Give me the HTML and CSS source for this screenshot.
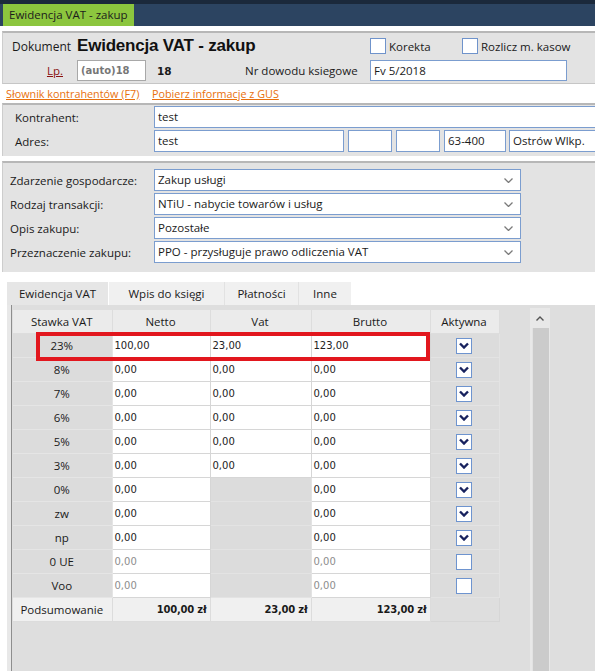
FILE: index.html
```html
<!DOCTYPE html>
<html lang="pl">
<head>
    <meta charset="UTF-8">
    <title>Ewidencja VAT - zakup</title>
    <link rel="stylesheet" href="styles.css">
</head>
<body>

<div class="topbar">
    <div class="doc-tab">Ewidencja VAT - zakup</div>
</div>

<!-- Document header -->
<section class="panel doc-head">
    <div class="row r1">
        <span class="lbl-doc">Dokument</span>
        <h1 class="doc-title">Ewidencja VAT - zakup</h1>
        <label class="chk chk-korekta"><span class="box"></span>Korekta</label>
        <label class="chk"><span class="box"></span>Rozlicz m. kasow</label>
    </div>
    <div class="row r2">
        <span class="lp"><a href="#">Lp.</a></span>
        <div class="field field-auto">(auto)18</div>
        <b class="num">18</b>
        <span class="lbl-nr">Nr dowodu ksiegowe</span>
        <div class="field field-nr">Fv 5/2018</div>
    </div>
</section>

<div class="links">
    <a href="#" class="link-first">Słownik kontrahentów (F7)</a>
    <a href="#">Pobierz informacje z GUS</a>
</div>

<!-- Kontrahent -->
<section class="panel contr">
    <div class="row">
        <span class="lbl">Kontrahent:</span>
        <div class="field w-full">test</div>
    </div>
    <div class="row">
        <span class="lbl">Adres:</span>
        <div class="field w-street">test</div>
        <div class="field w-nr"></div>
        <div class="field w-nr"></div>
        <div class="field w-zip">63-400</div>
        <div class="field w-city">Ostrów Wlkp.</div>
    </div>
</section>

<!-- Classification -->
<section class="panel events">
    <div class="row">
        <span class="lbl">Zdarzenie gospodarcze:</span>
        <div class="field select">Zakup usługi<svg class="chev" width="9" height="5"><polyline points="0.5,0.5 4.5,4.5 8.5,0.5"/></svg></div>
    </div>
    <div class="row">
        <span class="lbl">Rodzaj transakcji:</span>
        <div class="field select">NTiU - nabycie towarów i usług<svg class="chev" width="9" height="5"><polyline points="0.5,0.5 4.5,4.5 8.5,0.5"/></svg></div>
    </div>
    <div class="row">
        <span class="lbl">Opis zakupu:</span>
        <div class="field select">Pozostałe<svg class="chev" width="9" height="5"><polyline points="0.5,0.5 4.5,4.5 8.5,0.5"/></svg></div>
    </div>
    <div class="row">
        <span class="lbl">Przeznaczenie zakupu:</span>
        <div class="field select">PPO - przysługuje prawo odliczenia VAT<svg class="chev" width="9" height="5"><polyline points="0.5,0.5 4.5,4.5 8.5,0.5"/></svg></div>
    </div>
</section>

<div class="tabs">
    <div class="tab active">Ewidencja VAT</div>
    <div class="tab t-wpis">Wpis do księgi</div>
    <div class="tab t-plat">Płatności</div>
    <div class="tab t-inne">Inne</div>
</div>

<div class="grid-outer">
    <div class="grid-inner">
        <div class="table-wrap">
            <table class="vat">
                <colgroup>
                    <col class="c-rate">
                    <col class="c-net">
                    <col class="c-vat">
                    <col class="c-gross">
                    <col class="c-act">
                </colgroup>
                <thead>
                    <tr>
                        <th>Stawka VAT</th>
                        <th>Netto</th>
                        <th>Vat</th>
                        <th>Brutto</th>
                        <th>Aktywna</th>
                    </tr>
                </thead>
                <tbody id="rows"></tbody>
                <tfoot>
                    <tr>
                        <td class="rate">Podsumowanie</td>
                        <td class="sum">100,00 zł</td>
                        <td class="sum">23,00 zł</td>
                        <td class="sum">123,00 zł</td>
                        <td class="act"></td>
                    </tr>
                </tfoot>
            </table>
            <div class="highlight"></div>
        </div>
        <div class="scrollbar">
            <div class="sb-up"><svg width="8" height="5"><polyline points="0.5,4.5 4,1 7.5,4.5"/></svg></div>
            <div class="sb-thumb"></div>
        </div>
    </div>
</div>

<script>
    // rate, netto, vat (null = disabled), brutto, active, dimmed values
    const rows = [
        ["23%", "100,00", "23,00", "123,00", true, false],
        ["8%", "0,00", "0,00", "0,00", true, false],
        ["7%", "0,00", "0,00", "0,00", true, false],
        ["6%", "0,00", "0,00", "0,00", true, false],
        ["5%", "0,00", "0,00", "0,00", true, false],
        ["3%", "0,00", "0,00", "0,00", true, false],
        ["0%", "0,00", null, "0,00", true, false],
        ["zw", "0,00", null, "0,00", true, false],
        ["np", "0,00", null, "0,00", true, false],
        ["0 UE", "0,00", null, "0,00", false, true],
        ["Voo", "0,00", null, "0,00", false, true]
    ];

    const tick = '<svg width="10" height="7"><polyline points="1,1.5 5,5.5 9,1.5"/></svg>';
    let html = "";
    rows.forEach(r => {
        let dim = r[5] ? " dim" : "";
        html += `<tr>
            <td class="rate">${r[0]}</td>
            <td class="val${dim}">${r[1]}</td>
            ${r[2] === null ? '<td class="off"></td>' : `<td class="val${dim}">${r[2]}</td>`}
            <td class="val${dim}">${r[3]}</td>
            <td class="act"><span class="cb">${r[4] ? tick : ""}</span></td>
        </tr>`;
    });
    document.getElementById("rows").innerHTML = html;
</script>

</body>
</html>
```

FILE: styles.css
```css
/* General */
body {
    margin: 0;
    width: 595px;
    height: 672px;
    overflow: hidden;
    background: #fff;
    color: #1a1a1a;
    font-family: 'Open Sans', sans-serif;
    font-size: 11px;
}

a {
    color: inherit;
}

/* Top window bar */
.topbar {
    height: 26px;
    background: linear-gradient(#1b293b 0, #1b293b 4px, #2c4461 4px);
    display: flex;
    align-items: flex-end;
    padding-left: 3px;
}

.doc-tab {
    height: 22px;
    line-height: 22px;
    padding: 0 6px;
    background: #8cc63e;
    color: #1c1c1c;
    font-size: 11.5px;
}

/* Grey form panels */
.panel {
    margin-left: 2px;
    background: #e3e3e3;
    border-top: 2px solid #b7b7b7;
    border-left: 1px solid #cdcdcd;
}

.row {
    display: flex;
    align-items: center;
}

.field {
    box-sizing: border-box;
    height: 21px;
    line-height: 19px;
    padding: 0 3px;
    background: #fff;
    border: 1px solid #7b9dcf;
    white-space: nowrap;
    overflow: hidden;
    font-size: 11.5px;
}

/* Document header */
.doc-head {
    margin-top: 5px;
    height: 50px;
    border-bottom: 1px solid #c6c6c6;
}

.r1 {
    height: 26px;
}

.lbl-doc {
    width: 74px;
    box-sizing: border-box;
    padding-left: 9px;
    font-size: 12px;
}

.doc-title {
    width: 293px;
    margin: 0;
    font-family: 'Liberation Sans', sans-serif;
    font-size: 17px;
    font-weight: bold;
    letter-spacing: -0.2px;
    color: #111;
}

.chk {
    display: flex;
    align-items: center;
    font-size: 11.5px;
}

.chk-korekta {
    width: 92px;
}

.box {
    width: 16px;
    height: 16px;
    box-sizing: border-box;
    border: 1px solid #6f93cb;
    background: #fff;
    margin-right: 3px;
}

.r2 {
    margin-top: 1px;
}

.lp {
    width: 74px;
    box-sizing: border-box;
    text-align: right;
    padding-right: 14px;
    font-size: 11.5px;
}

.lp a {
    color: #8a1212;
}

.field-auto {
    width: 69px;
    border-color: #a8a8a8;
    font-family: 'DejaVu Sans', sans-serif;
    font-size: 10px;
    font-weight: bold;
    color: #777;
}

.num {
    width: 99px;
    box-sizing: border-box;
    padding-left: 11px;
    font-family: 'DejaVu Sans', sans-serif;
    font-size: 10.5px;
}

.lbl-nr {
    width: 125px;
    font-size: 11.5px;
}

.field-nr {
    width: 197px;
}

/* Orange links */
.links {
    display: flex;
    height: 19px;
    line-height: 19px;
    padding-left: 6px;
    font-size: 10.8px;
}

.links a {
    color: #e8700c;
}

.link-first {
    width: 146px;
}

/* Kontrahent */
.contr {
    height: 50px;
    padding-top: 1px;
}

.contr .row {
    margin-bottom: 2px;
}

.lbl {
    width: 151px;
    flex-shrink: 0;
    box-sizing: border-box;
    padding-left: 12px;
    font-size: 11.5px;
}

.contr .field {
    height: 22px;
    line-height: 20px;
    flex-shrink: 0;
}

.w-full { width: 460px; }
.w-street { width: 190px; margin-right: 4px; }
.w-nr { width: 44px; margin-right: 4px; }
.w-zip { width: 62px; margin-right: 3px; }
.w-city { width: 100px; }

/* Classification selects */
.events {
    margin-top: 5px;
    padding: 6px 0 9px;
}

.events .lbl {
    padding-left: 7px;
}

.events .row + .row {
    margin-top: 2px;
}

.select {
    position: relative;
    width: 367px;
    height: 22px;
    line-height: 20px;
}

.chev {
    position: absolute;
    right: 7px;
    top: 8px;
    fill: none;
    stroke: #7a7a7a;
    stroke-width: 1.3;
}

/* Tabs */
.tabs {
    display: flex;
    margin: 10px 0 0 7px;
    height: 23px;
}

.tab {
    line-height: 23px;
    text-align: center;
    background: #f0f0f0;
    font-size: 11.5px;
}

.tab.active {
    width: 101px;
    background: #e6e6e6;
}

.t-wpis { width: 115px; margin-left: 1px; }
.t-plat { width: 73px; border-left: 1px solid #e2e2e2; }
.t-inne { width: 52px; border-left: 1px solid #e2e2e2; }

/* Grid panel */
.grid-outer {
    margin-left: 7px;
    height: 366px;
    background: #e8e8e8;
    padding-left: 4px;
}

.grid-inner {
    height: 100%;
    display: flex;
    background: #dedede;
    border-left: 1px solid #8e8e8e;
    padding: 5px 0 0 1px;
    box-sizing: border-box;
}

.table-wrap {
    position: relative;
    width: 486px;
    flex-shrink: 0;
    align-self: flex-start;
}

.vat {
    border-collapse: collapse;
    table-layout: fixed;
    width: 486px;
}

.c-rate { width: 99px; }
.c-net { width: 98px; }
.c-vat { width: 101px; }
.c-gross { width: 119px; }
.c-act { width: 69px; }

.vat th,
.vat td {
    height: 23px;
    padding: 0 3px 0 2px;
    border: 1px solid #d6d6d6;
    white-space: nowrap;
    overflow: hidden;
}

.vat tr > :first-child {
    border-left: none;
}

.vat th {
    background: #ebebeb;
    font-weight: normal;
    font-size: 11.5px;
    border-color: #dddddd;
    border-top: none;
}

.vat td.rate {
    background: #dcdcdc;
    text-align: center;
    font-size: 11.5px;
    border-color: #e5e5e5;
}

.vat td.val {
    background: #fff;
    font-family: 'DejaVu Sans', sans-serif;
    font-size: 10px;
    color: #222;
}

.vat td.dim {
    color: #8d8d8d;
}

.vat td.off {
    background: #dcdcdc;
    border-color: #e3e3e3;
}

.vat td.act {
    background: #dcdcdc;
    text-align: center;
    border-color: #e3e3e3;
}

.cb {
    display: inline-block;
    width: 16px;
    height: 16px;
    box-sizing: border-box;
    border: 1px solid #6e94cf;
    background: #fff;
    vertical-align: middle;
    line-height: 12px;
}

.cb svg {
    fill: none;
    stroke: #18225e;
    stroke-width: 2.4;
}

/* Summary row */
.vat tfoot td {
    background: #f0f0f0;
    border-color: #dcdcdc;
}

.vat tfoot td.rate {
    background: #f0f0f0;
    border-color: #dcdcdc;
}

.vat td.sum {
    text-align: right;
    font-family: 'DejaVu Sans', sans-serif;
    font-size: 10px;
    font-weight: bold;
    letter-spacing: -0.2px;
}

.vat tfoot td.act {
    background: #dedede;
    border-color: #d6d6d6;
}

/* Red marker around the 23% row */
.highlight {
    position: absolute;
    left: 23px;
    top: 22px;
    width: 394px;
    height: 29px;
    box-sizing: border-box;
    border: 4px solid #e2171e;
}

/* Scrollbar */
.scrollbar {
    margin-left: 31px;
    margin-top: -2px;
    width: 20px;
    background: #e8e8e8;
    display: flex;
    flex-direction: column;
    align-items: center;
}

.sb-up {
    height: 20px;
    display: flex;
    align-items: center;
    justify-content: center;
}

.sb-up svg {
    fill: none;
    stroke: #555;
    stroke-width: 1.4;
}

.sb-thumb {
    flex: 1;
    width: 16px;
    background: #cbcbcb;
    border-left: 1px solid #e2e2e2;
}
```
